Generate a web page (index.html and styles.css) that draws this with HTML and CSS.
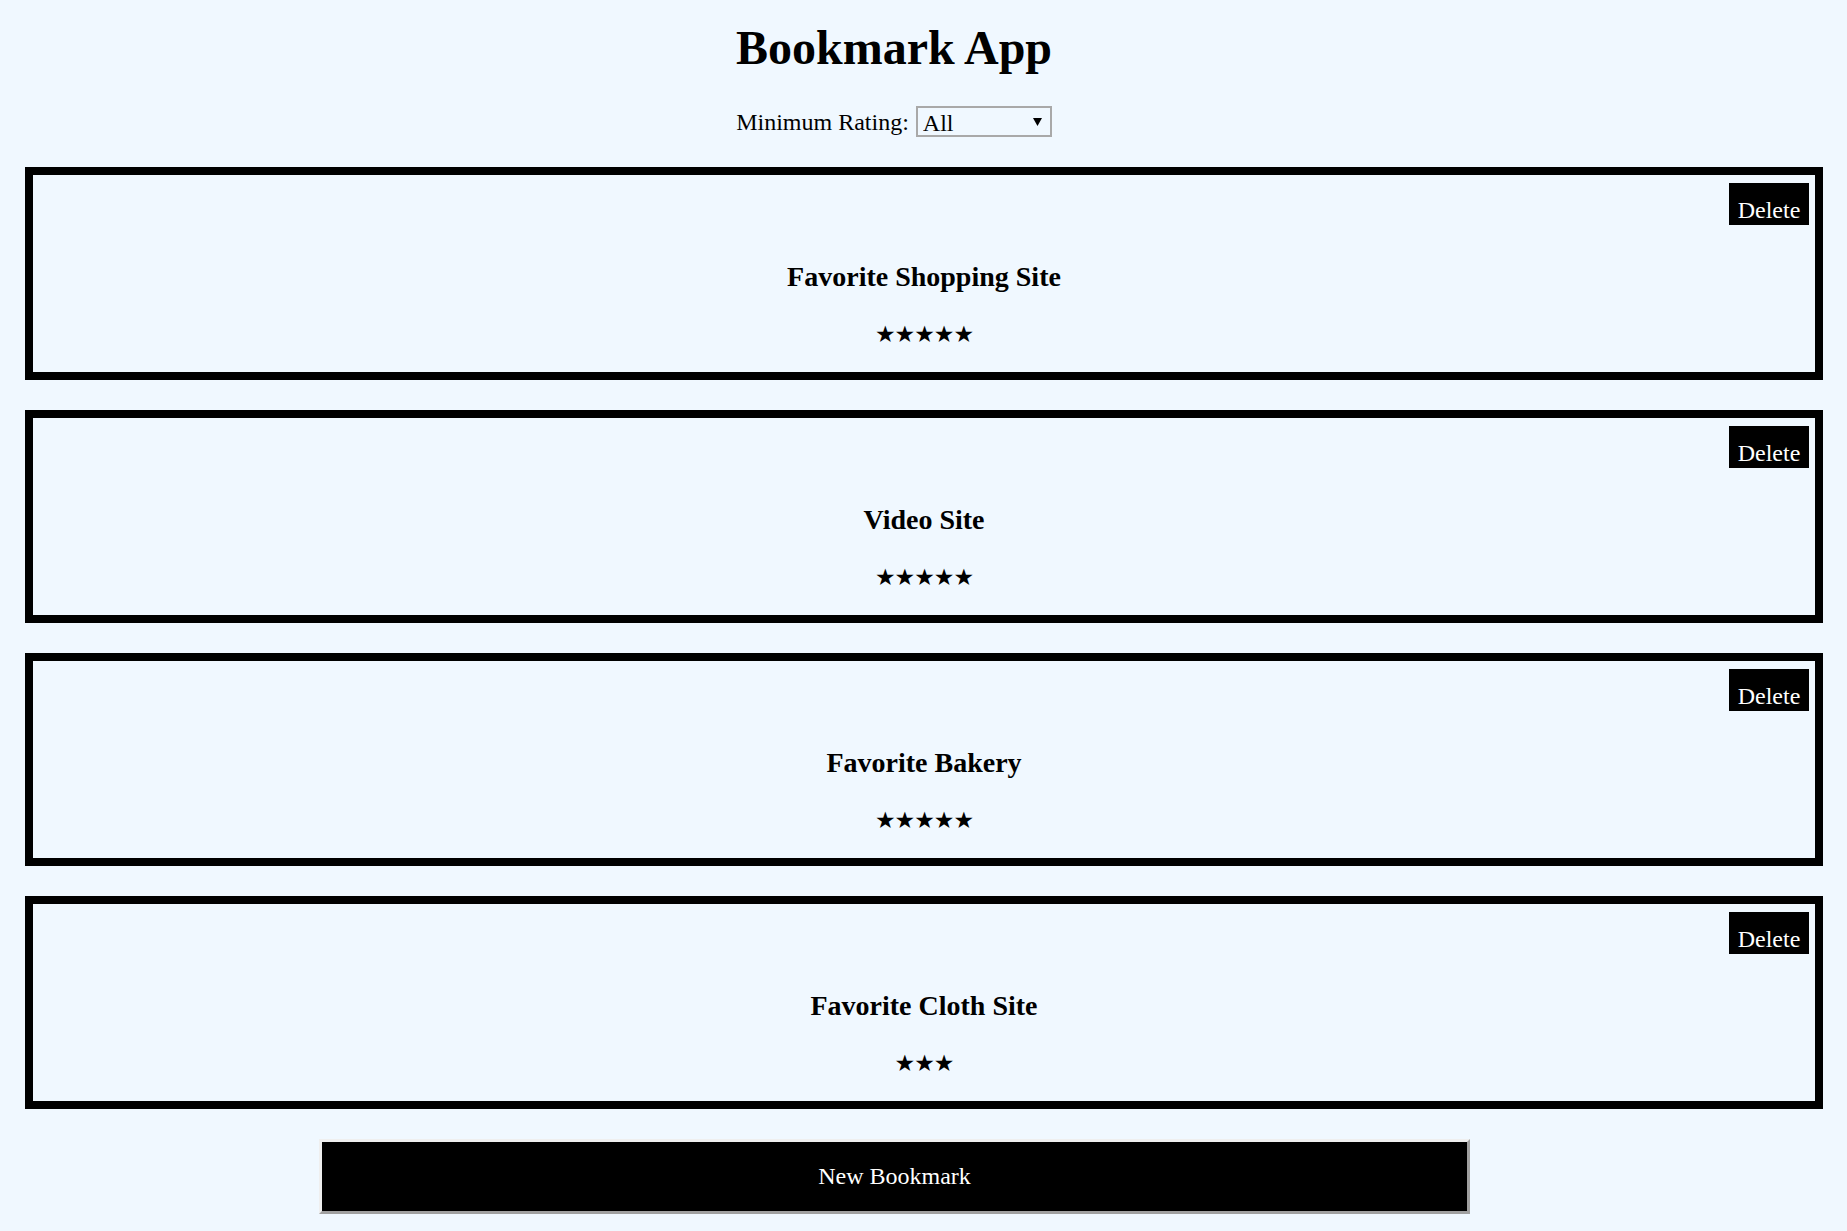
FILE: index.html
```html
<!DOCTYPE html>
<html lang="en">
<head>
<meta charset="utf-8">
<title>Bookmark App</title>
<link rel="stylesheet" href="styles.css">
</head>
<body>
<header class="header">
  <h1 class="app-title">Bookmark App</h1>
  <div class="filter">
    <label class="filter-label" for="rating">Minimum Rating:</label>
    <span class="select-wrap">
      <select id="rating" class="select">
        <option>All</option>
        <option>1</option>
        <option>2</option>
        <option>3</option>
        <option>4</option>
        <option>5</option>
      </select>
      <svg class="select-arrow" width="9" height="8" viewBox="0 0 9 8"><path d="M0 0H9L4.5 8Z" fill="#000"/></svg>
    </span>
  </div>
</header>
<main class="list">
  <section class="card">
    <button class="delete">Delete</button>
    <h3 class="card-title">Favorite Shopping Site</h3>
    <div class="stars">★★★★★</div>
  </section>
  <section class="card">
    <button class="delete">Delete</button>
    <h3 class="card-title">Video Site</h3>
    <div class="stars">★★★★★</div>
  </section>
  <section class="card">
    <button class="delete">Delete</button>
    <h3 class="card-title">Favorite Bakery</h3>
    <div class="stars">★★★★★</div>
  </section>
  <section class="card">
    <button class="delete">Delete</button>
    <h3 class="card-title">Favorite Cloth Site</h3>
    <div class="stars">★★★</div>
  </section>
</main>
<div class="actions">
  <button class="new-btn">New Bookmark</button>
</div>
</body>
</html>
```
FILE: styles.css
```css
html, body {
  margin: 0;
  padding: 0;
  background: #f0f8ff;
}
body {
  font-family: "Liberation Serif", "Times New Roman", serif;
  font-size: 24px;
  color: #000;
  padding-bottom: 18px;
}
.header {
  width: 1788px;
  text-align: center;
}
.app-title {
  margin: 0;
  padding-top: 20px;
  font-size: 48px;
  font-weight: bold;
  line-height: 55px;
}
.filter {
  margin-top: 31px;
  display: flex;
  justify-content: center;
  align-items: center;
  gap: 7px;
  height: 31px;
}
.filter-label {
  font-size: 24px;
  position: relative;
  top: 1px;
}
.select-wrap {
  position: relative;
  display: inline-block;
}
.select {
  appearance: none;
  -webkit-appearance: none;
  width: 136px;
  height: 31px;
  box-sizing: border-box;
  border: 2px solid #a9a9a9;
  border-radius: 0;
  background: transparent;
  font-family: "Liberation Serif", "Times New Roman", serif;
  font-size: 24px;
  color: #000;
  padding: 2px 0 0 5px;
  line-height: 26px;
  display: block;
}
.select-arrow {
  position: absolute;
  right: 10px;
  top: 12px;
  pointer-events: none;
}
.list {
  margin-top: 30px;
  display: flex;
  flex-direction: column;
  gap: 30px;
  padding: 0 24px 0 25px;
}
.card {
  height: 213px;
  box-sizing: border-box;
  border: 8px solid #000;
  display: flex;
  flex-direction: column;
  align-items: center;
}
.delete {
  align-self: flex-end;
  margin: 8px 6px 0 0;
  width: 80px;
  height: 42px;
  box-sizing: border-box;
  padding: 13px 0 0;
  border: none;
  background: #000;
  color: #fff;
  font-family: "Liberation Serif", "Times New Roman", serif;
  font-size: 24px;
  line-height: 27px;
  text-align: center;
}
.card-title {
  margin: 36px 0 0;
  font-size: 28px;
  font-weight: bold;
  line-height: 32px;
}
.stars {
  margin-top: 27px;
  font-family: "DejaVu Sans", sans-serif;
  font-size: 23px;
  letter-spacing: -1px;
  line-height: 28px;
}
.actions {
  margin-top: 30px;
  padding-left: 319px;
}
.new-btn {
  width: 1151px;
  height: 75px;
  box-sizing: border-box;
  border-style: solid;
  border-width: 3px;
  border-color: #efefef #a0a0a0 #a0a0a0 #efefef;
  background: #000;
  color: #fff;
  font-family: "Liberation Serif", "Times New Roman", serif;
  font-size: 24px;
  line-height: 27px;
  padding: 0;
  text-align: center;
}
```
